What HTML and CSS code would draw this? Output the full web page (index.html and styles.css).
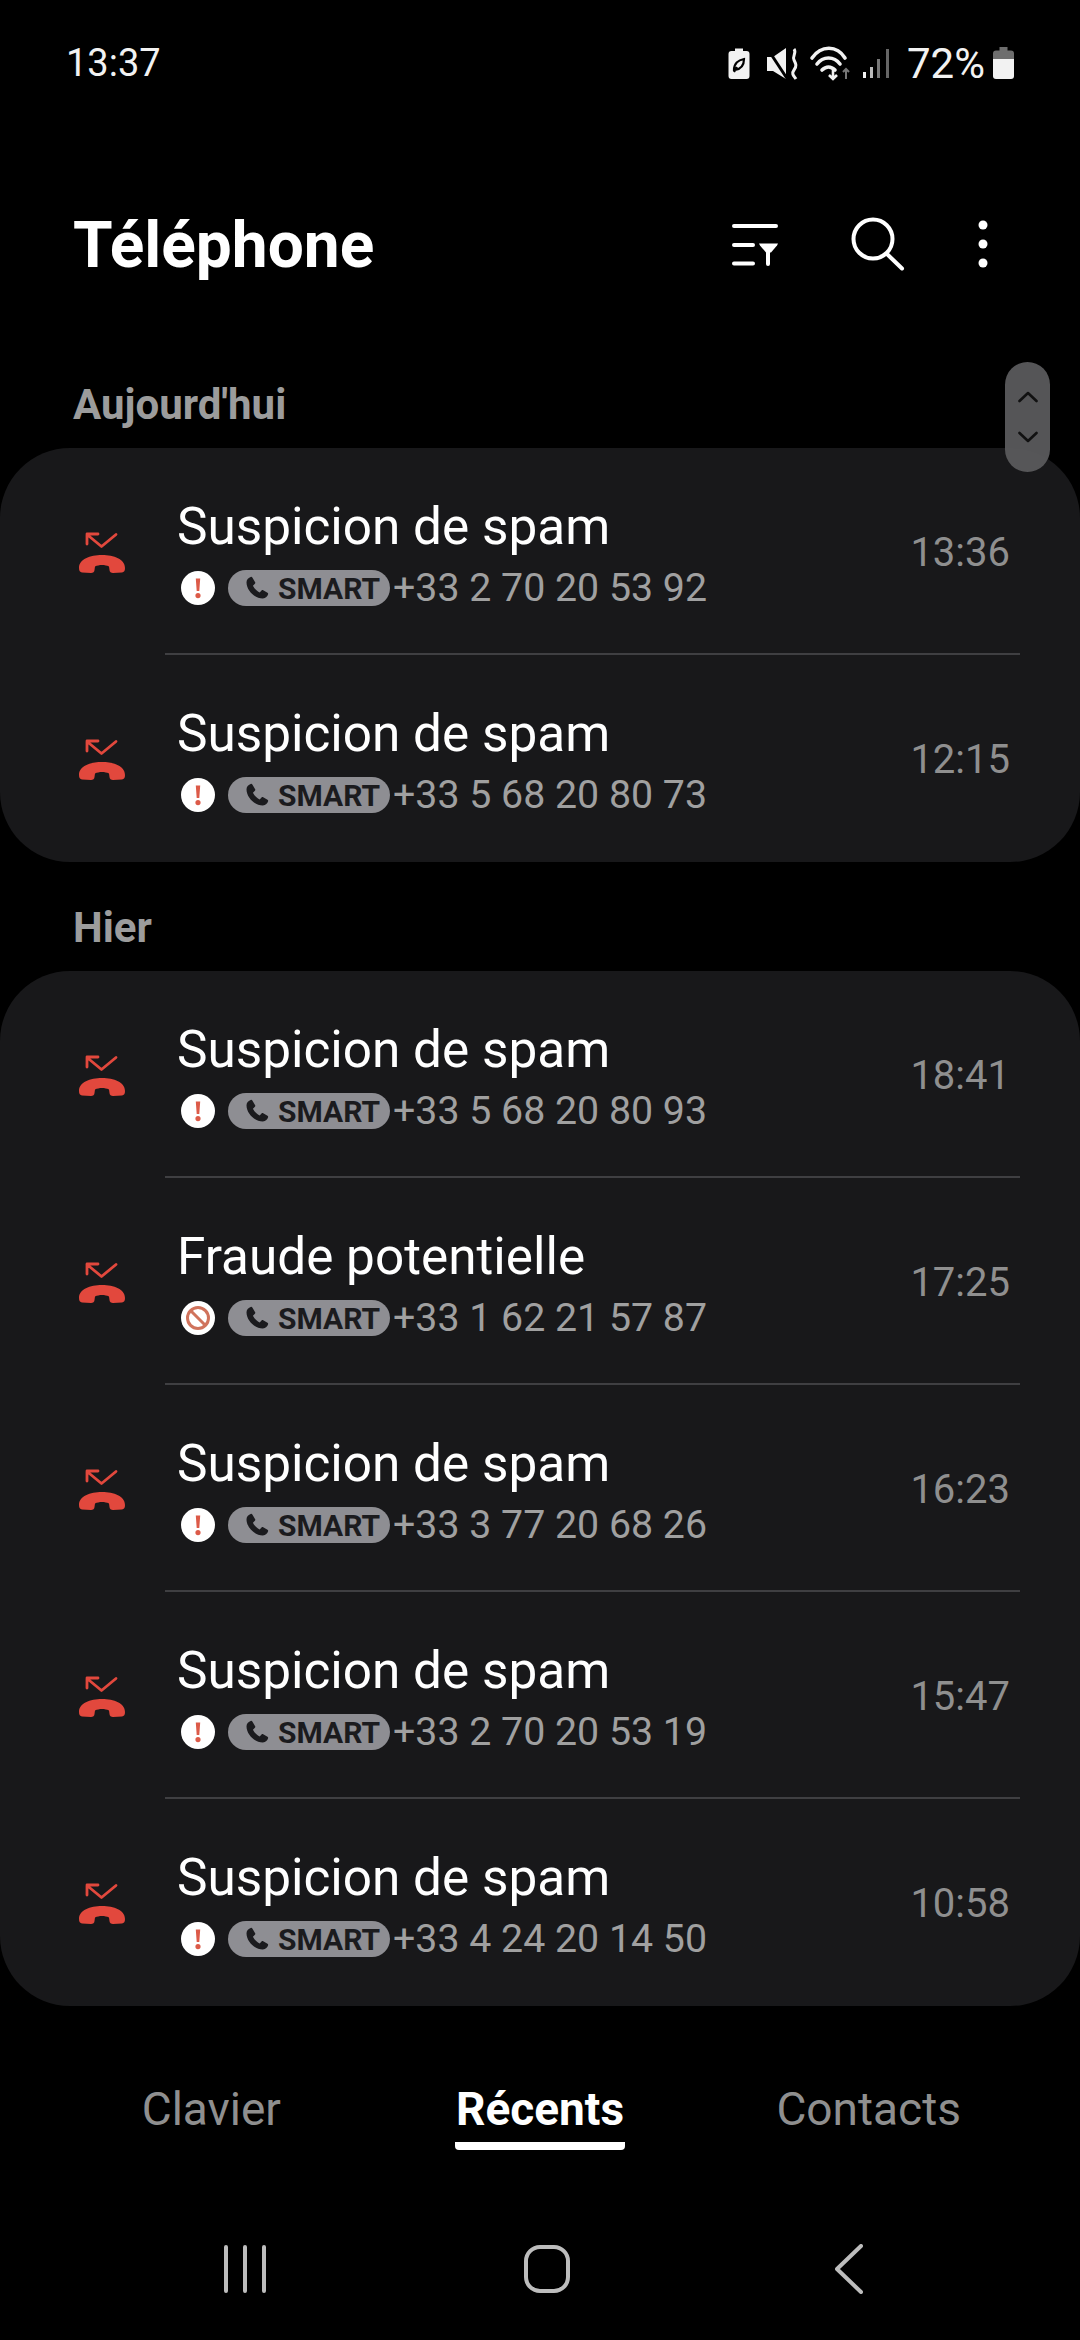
FILE: index.html
```html
<!DOCTYPE html>
<html lang="fr">
<head>
    <meta charset="UTF-8">
    <meta name="viewport" content="width=device-width, initial-scale=1.0">
    <title>Téléphone</title>
    <link rel="stylesheet" href="styles.css">
</head>
<body>
    <svg class="defs" width="0" height="0">
        <symbol id="missed" viewBox="36 50 52 46">
            <path fill="#e2483d" d="M39 88C39 79 50 75 62 75C74 75 85 79 85 88C85 91 84 92 82 92.5L73 93C71 93 69.500 92 69.500 90L69 86.500C65 84.500 59 84.500 55 86.500L54.500 90C54.500 92 53 93 51 93L42 92.5C40 92 39 91 39 88Z"/>
            <path fill="none" stroke="#e2483d" stroke-width="2.8" stroke-linecap="round" stroke-linejoin="round" d="M76 54.5L61.5 66.5L47 54.5M47 64V54H58"/>
        </symbol>
        <symbol id="warn" viewBox="0 0 34 34">
            <circle cx="17" cy="17" r="17" fill="#fff"/>
            <path fill="#dc5a48" d="M14.8 7.500h4.400l-.9 12.500h-2.600zM17 22a2.600 2.600 0 1 1 0 5.200a2.600 2.600 0 0 1 0-5.200z"/>
        </symbol>
        <symbol id="block" viewBox="0 0 34 34">
            <circle cx="17" cy="17" r="17" fill="#fff"/>
            <circle cx="17" cy="17" r="10.500" fill="none" stroke="#d0735c" stroke-width="3"/>
            <path stroke="#d0735c" stroke-width="3" d="M10 10l14 14"/>
        </symbol>
        <symbol id="handset" viewBox="0 0 24 24">
            <path fill="#1b1b1e" d="M6.600 2.500C5 3 3 4.500 3 7c0 7 7 14 14 14 2.500 0 4-2 4.500-3.600.2-.6 0-1.100-.5-1.400l-3.700-2.100c-.5-.3-1-.2-1.400.2l-1.600 1.700c-2.600-1.200-4.600-3.200-5.800-5.800l1.700-1.600c.4-.4.500-.9.2-1.400L8 3c-.3-.5-.8-.7-1.400-.5z"/>
        </symbol>
    </svg>

    <div class="status-bar">
        <span class="status-time">13:37</span>
        <div class="status-right">
            <svg class="status-icons" width="163" height="36" viewBox="727 46 163 36">
                <path fill="#f2f2f2" d="M734 52v-2.500h8V52h3.500a3 3 0 0 1 3 3v22a3 3 0 0 1-3 3h-15a3 3 0 0 1-3-3V55a3 3 0 0 1 3-3z"/>
                <path fill="none" stroke="#000" stroke-width="2.200" d="M733 71c0-6 4-10 10-11 0 6-3 10-9 11zm3-3l-3 5"/>
                <path fill="#f2f2f2" d="M766 58h6l13-9v31l-13-8h-6z"/>
                <path fill="none" stroke="#000" stroke-width="3" d="M766 49l21 32"/>
                <path fill="none" stroke="#f2f2f2" stroke-width="3" d="M793 50c3 4-2 7 0 11s3 6 0 10 0 6 2 9"/>
                <g fill="none" stroke="#f2f2f2" stroke-width="3.600" stroke-linecap="round">
                    <path d="M811 59c9-13 25-13 33 0"/>
                    <path d="M816 65c6-8 17-8 23 0"/>
                    <path d="M821 71c4-4 9-4 13 0"/>
                </g>
                <path fill="none" stroke="#f2f2f2" stroke-width="2.600" d="M832 69v11m-4-4l4 4 4-4"/>
                <path fill="none" stroke="#777" stroke-width="2" d="M845 80v-10m-3 3l3-3 3 3"/>
                <g>
                    <rect x="862" y="73" width="3" height="6" fill="#f2f2f2"/>
                    <rect x="869" y="68" width="3" height="11" fill="#bbb"/>
                    <rect x="876" y="60" width="3" height="19" fill="#777"/>
                    <rect x="885" y="50" width="3" height="29" fill="#666"/>
                </g>
            </svg>
            <span class="status-pct">72%</span>
            <svg width="21" height="32" viewBox="0 0 21 32">
                <path fill="#6e6e6e" d="M6.500 0h8v3.500H18a3 3 0 0 1 3 3V12H0V6.500a3 3 0 0 1 3-3h3.500z"/>
                <path fill="#f2f2f2" d="M0 12h21v17a3 3 0 0 1-3 3H3a3 3 0 0 1-3-3z"/>
            </svg>
        </div>
    </div>

    <div class="app-header">
        <h1>Téléphone</h1>
        <div class="header-icons">
            <svg width="46" height="46" viewBox="0 -3 46 46">
                <g fill="none" stroke="#fff" stroke-width="4" stroke-linecap="round">
                    <path d="M2 2h42M2 21h19M2 39.500h19"/>
                    <path d="M36 24v16"/>
                </g>
                <path fill="#fff" d="M27 19.500h19l-1 2-6 7h-5l-6-7z"/>
            </svg>
            <svg width="54" height="54" viewBox="0 0 54 54">
                <circle cx="22" cy="22" r="19.500" fill="none" stroke="#fff" stroke-width="4"/>
                <path fill="none" stroke="#fff" stroke-width="4" stroke-linecap="round" d="M36 37l15 14.500"/>
            </svg>
            <svg width="10" height="48" viewBox="0 0 10 48">
                <circle cx="5" cy="5" r="4.500" fill="#fff"/>
                <circle cx="5" cy="24" r="4.500" fill="#fff"/>
                <circle cx="5" cy="43" r="4.500" fill="#fff"/>
            </svg>
        </div>
    </div>

    <div class="scroll-handle">
        <svg width="20" height="52" viewBox="0 0 20 52">
            <path fill="none" stroke="#111" stroke-width="2.600" stroke-linecap="round" stroke-linejoin="round" d="M1.500 10L10 2l8.500 8M1.500 42l8.500 8 8.500-8"/>
        </svg>
    </div>

    <main class="call-log">
        <h2 class="day-label">Aujourd'hui</h2>
        <section class="card">
            <div class="call-row">
                <svg class="call-type"><use href="#missed"/></svg>
                <div class="call-info">
                    <div class="call-name">Suspicion de spam</div>
                    <div class="call-sub">
                        <svg class="flag"><use href="#warn"/></svg>
                        <span class="smart"><svg><use href="#handset"/></svg>SMART</span>
                        <span class="call-number">+33 2 70 20 53 92</span>
                    </div>
                </div>
                <span class="call-time">13:36</span>
            </div>
            <div class="call-row">
                <svg class="call-type"><use href="#missed"/></svg>
                <div class="call-info">
                    <div class="call-name">Suspicion de spam</div>
                    <div class="call-sub">
                        <svg class="flag"><use href="#warn"/></svg>
                        <span class="smart"><svg><use href="#handset"/></svg>SMART</span>
                        <span class="call-number">+33 5 68 20 80 73</span>
                    </div>
                </div>
                <span class="call-time">12:15</span>
            </div>
        </section>

        <h2 class="day-label">Hier</h2>
        <section class="card">
            <div class="call-row">
                <svg class="call-type"><use href="#missed"/></svg>
                <div class="call-info">
                    <div class="call-name">Suspicion de spam</div>
                    <div class="call-sub">
                        <svg class="flag"><use href="#warn"/></svg>
                        <span class="smart"><svg><use href="#handset"/></svg>SMART</span>
                        <span class="call-number">+33 5 68 20 80 93</span>
                    </div>
                </div>
                <span class="call-time">18:41</span>
            </div>
            <div class="call-row">
                <svg class="call-type"><use href="#missed"/></svg>
                <div class="call-info">
                    <div class="call-name">Fraude potentielle</div>
                    <div class="call-sub">
                        <svg class="flag"><use href="#block"/></svg>
                        <span class="smart"><svg><use href="#handset"/></svg>SMART</span>
                        <span class="call-number">+33 1 62 21 57 87</span>
                    </div>
                </div>
                <span class="call-time">17:25</span>
            </div>
            <div class="call-row">
                <svg class="call-type"><use href="#missed"/></svg>
                <div class="call-info">
                    <div class="call-name">Suspicion de spam</div>
                    <div class="call-sub">
                        <svg class="flag"><use href="#warn"/></svg>
                        <span class="smart"><svg><use href="#handset"/></svg>SMART</span>
                        <span class="call-number">+33 3 77 20 68 26</span>
                    </div>
                </div>
                <span class="call-time">16:23</span>
            </div>
            <div class="call-row">
                <svg class="call-type"><use href="#missed"/></svg>
                <div class="call-info">
                    <div class="call-name">Suspicion de spam</div>
                    <div class="call-sub">
                        <svg class="flag"><use href="#warn"/></svg>
                        <span class="smart"><svg><use href="#handset"/></svg>SMART</span>
                        <span class="call-number">+33 2 70 20 53 19</span>
                    </div>
                </div>
                <span class="call-time">15:47</span>
            </div>
            <div class="call-row">
                <svg class="call-type"><use href="#missed"/></svg>
                <div class="call-info">
                    <div class="call-name">Suspicion de spam</div>
                    <div class="call-sub">
                        <svg class="flag"><use href="#warn"/></svg>
                        <span class="smart"><svg><use href="#handset"/></svg>SMART</span>
                        <span class="call-number">+33 4 24 20 14 50</span>
                    </div>
                </div>
                <span class="call-time">10:58</span>
            </div>
        </section>
    </main>

    <nav class="tabs">
        <div class="tab">Clavier</div>
        <div class="tab active"><span>Récents</span></div>
        <div class="tab">Contacts</div>
    </nav>

    <div class="nav-bar">
        <svg width="42" height="48" viewBox="0 0 42 48">
            <path fill="none" stroke="#bdbdbd" stroke-width="4" stroke-linecap="round" d="M2 2v44M21 2v44M40 2v44"/>
        </svg>
        <svg width="46" height="48" viewBox="0 0 46 48">
            <rect x="2" y="2" width="42" height="44" rx="14" fill="none" stroke="#bdbdbd" stroke-width="4"/>
        </svg>
        <svg width="28" height="50" viewBox="0 0 28 50">
            <path fill="none" stroke="#bdbdbd" stroke-width="4" stroke-linecap="round" stroke-linejoin="round" d="M26 2L2 25l24 23"/>
        </svg>
    </div>
</body>
</html>
```

FILE: styles.css
```css
* {
    box-sizing: border-box;
}

body {
    font-family: Roboto, "Noto Sans", sans-serif;
    background-color: #000;
    color: #fff;
    margin: 0;
    width: 1080px;
    height: 2340px;
    position: relative;
    overflow: hidden;
}

.defs {
    display: block;
    height: 0;
}

.status-bar {
    height: 126px;
    display: flex;
    justify-content: space-between;
    align-items: center;
    padding: 0 66px;
    font-size: 38px;
    color: #f2f2f2;
}

.status-right {
    display: flex;
    align-items: center;
}

.status-pct {
    font-size: 42px;
    margin: 0 8px 0 16px;
}

.app-header {
    height: 212px;
    display: flex;
    justify-content: space-between;
    align-items: flex-start;
    padding: 85px 92px 0 73px;
}

.app-header h1 {
    margin: 0;
    font-size: 64px;
    line-height: 70px;
    font-weight: 700;
}

.header-icons {
    display: flex;
    align-items: center;
    gap: 73px;
    padding-top: 6px;
}

.scroll-handle {
    position: absolute;
    left: 1005px;
    top: 362px;
    width: 45px;
    height: 110px;
    border-radius: 23px;
    background-color: rgba(90, 90, 92, 0.95);
    display: flex;
    justify-content: center;
    align-items: center;
}

.day-label {
    margin: 0;
    padding: 45px 0 21px 73px;
    font-size: 42px;
    line-height: 44px;
    font-weight: 700;
    color: #9c9c9c;
}

.card + .day-label {
    padding: 44px 0 21px 73px;
}

.card {
    background-color: #18181a;
    border-radius: 70px;
}

.call-row {
    height: 207px;
    display: flex;
    align-items: center;
    padding: 0 70px 0 76px;
    position: relative;
}

.call-row + .call-row::before {
    content: "";
    position: absolute;
    left: 165px;
    right: 60px;
    top: -2px;
    height: 2px;
    background-color: #3f3f42;
}

.call-type {
    width: 52px;
    height: 46px;
    flex: none;
    margin-right: 50px;
    margin-top: 2px;
}

.call-info {
    flex: 1;
    margin-left: -1px;
    padding-top: 2px;
}

.call-name {
    font-size: 51.3px;
    line-height: 60px;
    color: #fff;
}

.call-sub {
    display: flex;
    align-items: center;
    margin-top: 11px;
    height: 40px;
    padding-left: 1px;
}

.flag {
    width: 34px;
    height: 34px;
    margin: 0 13px 0 3px;
    flex: none;
}

.smart {
    width: 162px;
    height: 36px;
    border-radius: 18px;
    background-color: #8e8e93;
    color: #1b1b1e;
    font-size: 30px;
    font-weight: 700;
    display: flex;
    align-items: center;
    padding-left: 15px;
    gap: 7px;
    flex: none;
}

.smart svg {
    width: 28px;
    height: 28px;
}

.call-number {
    font-size: 39.3px;
    color: #a0a0a0;
    margin-left: 3px;
}

.call-time {
    font-size: 40px;
    color: #8f8f8f;
    margin-top: 2px;
}

.tabs {
    display: flex;
    padding: 0 47px;
    margin-top: 78px;
    font-size: 46px;
    color: #8f8f8f;
}

.tab {
    flex: 1;
    text-align: center;
    line-height: 50px;
}

.tab.active {
    color: #fff;
    font-weight: 700;
}

.tab.active span {
    display: inline-block;
    padding: 0 1px 8px;
    border-bottom: 8px solid #fff;
    border-radius: 0 0 4px 4px;
}

.nav-bar {
    display: grid;
    grid-template-columns: repeat(3, 302px);
    justify-items: center;
    align-items: center;
    padding: 0 0 0 94px;
    position: absolute;
    left: 0;
    right: 0;
    top: 2244px;
    height: 48px;
}
```
